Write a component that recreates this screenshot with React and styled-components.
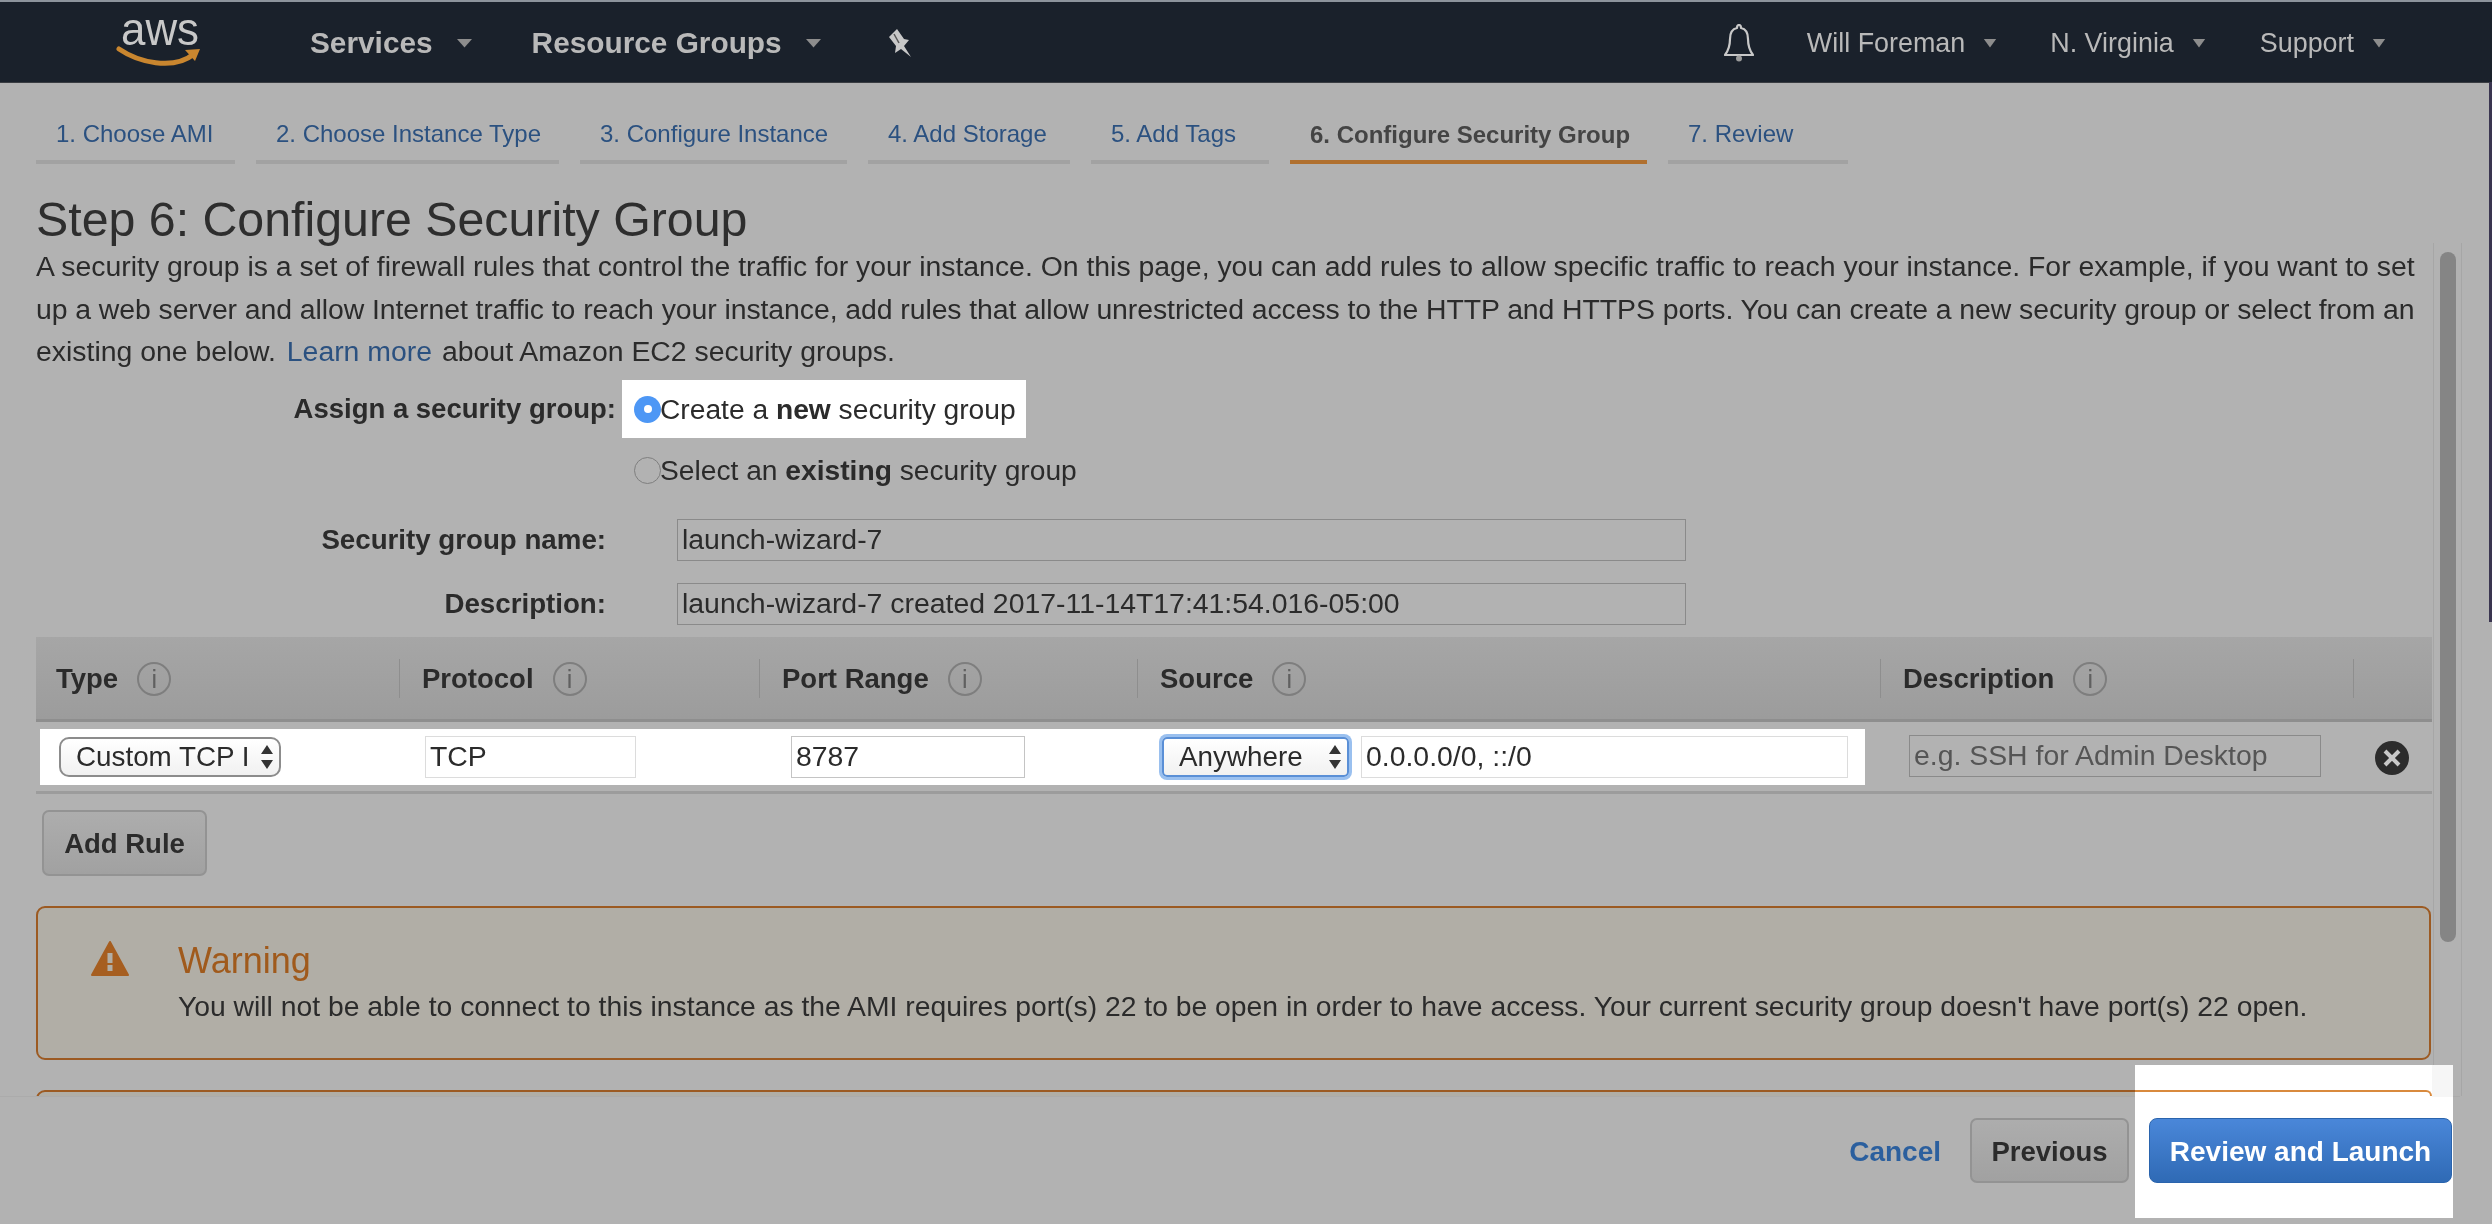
import React from "react";
import styled, { createGlobalStyle } from "styled-components";

const Global = createGlobalStyle`
  html, body { margin: 0; padding: 0; background: #b2b2b2; }
  body { font-family: "Liberation Sans", Arial, sans-serif; color: #2b2b2b; }
  * { box-sizing: border-box; }
`;

const Page = styled.div`
  position: relative;
  width: 2492px;
  height: 1224px;
  overflow: hidden;
  background: #b2b2b2;
  display: flex;
  flex-direction: column;
  filter: blur(0.4px);
`;

const EdgeStrip = styled.div`
  position: absolute;
  top: 82px;
  right: 0;
  width: 3px;
  height: 540px;
  background: #3a3550;
`;

const Nav = styled.header`
  height: 83px;
  flex: none;
  background: #1a212b;
  border-top: 2px solid #8d949c;
  border-bottom: 1px solid #3a3d42;
  display: flex;
  align-items: center;
  padding: 2px 106px 0 118px;
`;

const LogoBox = styled.svg`
  width: 90px;
  height: 60px;
  margin-right: 102px;
  margin-top: -2px;
  flex: none;
  overflow: visible;
`;

const NavLink = styled.span`
  display: inline-flex;
  align-items: center;
  gap: ${p => p.$gap ?? 23}px;
  font-size: ${p => (p.$bold ? 29.8 : 26.9)}px;
  font-weight: ${p => (p.$bold ? 700 : 400)};
  color: #b9b9b9;
  margin-right: ${p => p.$mr ?? 0}px;
  white-space: nowrap;
`;

const Caret = styled.svg`
  width: ${p => p.$w ?? 17}px;
  height: 10px;
  flex: none;
`;

const PinIcon = styled.svg`
  width: 24px;
  height: 30px;
  flex: none;
`;

const BellIcon = styled.svg`
  width: 30px;
  height: 38px;
  margin-right: 53px;
  flex: none;
`;

const NavRight = styled.div`
  margin-left: auto;
  display: flex;
  align-items: center;
`;

const Tabs = styled.nav`
  display: flex;
  gap: 21px;
  padding: 0 0 0 36px;
  margin-top: 34px;
  flex: none;
`;

const Tab = styled.div`
  width: ${p => p.$w}px;
  height: 47px;
  padding: ${p => (p.$active ? 4 : 3)}px 0 0 20px;
  border-bottom: 4px solid ${p => (p.$active ? "#b0702f" : "#a2a2a2")};
  font-size: 24px;
  font-weight: ${p => (p.$active ? 700 : 400)};
  color: ${p => (p.$active ? "#444" : "#2b5180")};
  line-height: 28px;
  white-space: nowrap;
`;

const Main = styled.main`
  position: relative;
  flex: none;
  height: 932px;
  padding: 28px 60px 0 36px;
  overflow: hidden;
`;

const Title = styled.h1`
  margin: 0;
  font-size: 48.3px;
  font-weight: 400;
  line-height: 54px;
  color: #2e2e2e;
`;

const Intro = styled.div`
  margin: -1px 0 0;
  font-size: 28.4px;
  line-height: 42.5px;
  color: #2b2b2b;
  white-space: nowrap;
`;

const IntroLine = styled.p`
  margin: 0;
  letter-spacing: ${p => p.$ls ?? 0}px;
`;

const Link = styled.span`
  color: #2b5180;
  margin-left: 3px;
  margin-right: 10px;
`;

const AssignRow = styled.div`
  display: flex;
  align-items: center;
  height: 60px;
  margin-top: ${p => p.$mt}px;
`;

const AssignLabel = styled.div`
  width: 580px;
  text-align: right;
  font-size: 27.5px;
  font-weight: 700;
  flex: none;
`;

const Choice = styled.div`
  display: inline-flex;
  align-items: center;
  height: 58px;
  padding: 0 10px 0 12px;
  margin-left: 6px;
  font-size: 28.2px;
  background: ${p => (p.$lit ? "#fff" : "transparent")};
  white-space: nowrap;
`;

const Radio = styled.span`
  width: 27px;
  height: 27px;
  margin-right: -1px;
  border-radius: 50%;
  flex: none;
  background: ${p => (p.$on ? "#4d97f5" : "transparent")};
  border: ${p => (p.$on ? "none" : "1.5px solid #7f7f7f")};
  display: flex;
  align-items: center;
  justify-content: center;
  &::after {
    content: "";
    display: ${p => (p.$on ? "block" : "none")};
    width: 8px;
    height: 8px;
    border-radius: 50%;
    background: #fff;
  }
`;

const FieldRow = styled.div`
  display: flex;
  align-items: center;
  height: 42px;
  margin-top: ${p => p.$mt}px;
`;

const FieldLabel = styled.div`
  width: 570px;
  text-align: right;
  font-size: 27.7px;
  font-weight: 700;
  flex: none;
`;

const FieldInput = styled.div`
  margin-left: 71px;
  width: 1009px;
  height: 42px;
  border: 1.5px solid #8a8a8a;
  padding-left: 4px;
  font-size: 28.4px;
  line-height: 38px;
  white-space: nowrap;
`;

const TableHead = styled.div`
  margin-top: 12px;
  width: 2396px;
  height: 85px;
  display: grid;
  grid-template-columns: 364px 360px 378px 743px 473px 78px;
  align-items: center;
  background: linear-gradient(#a6a6a6, #9c9c9c);
  border-bottom: 3px solid #8e8e8e;
`;

const HeadCell = styled.div`
  height: 39px;
  display: flex;
  align-items: center;
  gap: 19px;
  padding-top: 2px;
  padding-left: ${p => p.$pl ?? 22}px;
  font-size: 27.5px;
  font-weight: 700;
  border-right: ${p => (p.$bare ? "none" : "1px solid #8e8e8e")};
`;

const InfoIcon = styled.span`
  width: 34px;
  height: 34px;
  border-radius: 50%;
  border: 2.5px solid #7e7e7e;
  color: #606060;
  font-size: 25px;
  font-weight: 400;
  display: flex;
  align-items: center;
  justify-content: center;
`;

const RuleRow = styled.div`
  margin-top: 4px;
  width: 2396px;
  height: 68px;
  display: flex;
  border-bottom: 3px solid #9c9c9c;
  padding: 3px 0 5px 4px;
`;

const LitCell = styled.div`
  width: 1825px;
  height: 56px;
  background: #fff;
  flex: none;
  display: flex;
  align-items: center;
`;

const SelectBox = styled.div`
  width: ${p => p.$w}px;
  height: 40px;
  margin-left: ${p => p.$ml}px;
  flex: none;
  background: linear-gradient(#fff, #f1f1f1);
  border: 2px solid ${p => (p.$focus ? "#5a8fd6" : "#8c8c8c")};
  border-radius: ${p => (p.$focus ? 5 : 10)}px;
  box-shadow: ${p => (p.$focus ? "0 0 0 3px #9ac0ef" : "none")};
  display: flex;
  align-items: center;
  justify-content: space-between;
  padding: 0 5px 0 15px;
  font-size: 27.8px;
  color: #2b2b2b;
  white-space: nowrap;
  overflow: hidden;
`;

const SelectArrows = styled.svg`
  width: 14px;
  height: 26px;
  flex: none;
`;

const RowInput = styled.div`
  width: ${p => p.$w}px;
  height: 42px;
  margin-left: ${p => p.$ml}px;
  margin-top: ${p => p.$mt ?? 0}px;
  flex: none;
  border: 1.5px solid ${p => p.$c ?? "#dcdcdc"};
  padding-left: 4px;
  font-size: 28.4px;
  line-height: 38px;
  color: ${p => (p.$ph ? "#555" : "#2b2b2b")};
  white-space: nowrap;
`;

const RemoveBox = styled.svg`
  width: 36px;
  height: 36px;
  margin-left: 53px;
  margin-top: 11px;
  flex: none;
`;

const GreyButton = styled.div`
  height: ${p => p.$h}px;
  width: ${p => p.$w}px;
  flex: none;
  display: flex;
  align-items: center;
  justify-content: center;
  padding-top: 2px;
  font-size: 27.5px;
  font-weight: 700;
  color: #2b2b2b;
  border: 2px solid #939393;
  border-radius: 7px;
  background: linear-gradient(#adadad, #a1a1a1);
`;

const AddRuleWrap = styled.div`
  margin: 16px 0 0 6px;
`;

const Alert = styled.section`
  margin-top: 30px;
  width: 2395px;
  height: 154px;
  flex: none;
  background: #b1aea6;
  border: 2px solid #9c5a22;
  border-radius: 9px;
  display: flex;
  padding: 34px 0 0 53px;
`;

const AlertIcon = styled.svg`
  width: 38px;
  height: 37px;
  margin-top: -2px;
  flex: none;
  margin-right: 49px;
`;

const AlertTitle = styled.div`
  font-size: 36px;
  line-height: 38px;
  color: #a05a1c;
`;

const AlertText = styled.div`
  margin-top: 7px;
  font-size: 28.3px;
  line-height: 38px;
  color: #2b2b2b;
  white-space: nowrap;
`;

const NextAlert = styled.div`
  margin-top: 30px;
  width: 2395px;
  height: 60px;
  border: 2px solid #9c5a22;
  border-radius: 9px;
  background: #b1aea6;
`;

const Track = styled.div`
  position: absolute;
  top: 79px;
  right: 30px;
  bottom: 0;
  width: 29px;
  border-left: 1px solid #a6a6a6;
  border-right: 1px solid #a6a6a6;
`;

const Thumb = styled.div`
  position: absolute;
  top: 9px;
  left: 6px;
  width: 16px;
  height: 690px;
  border-radius: 8px;
  background: #858585;
`;

const Footer = styled.footer`
  display: flex;
  justify-content: flex-end;
  align-items: center;
  gap: 20px;
  padding: 21px 8px 0 0;
  border-top: 1px solid #ababab;
  margin-right: 32px;
`;

const CancelLink = styled.span`
  padding-top: 2px;
  font-size: 28px;
  font-weight: 700;
  color: #2b5f9e;
  margin-right: 9px;
`;

const FooterSpacer = styled.div`
  width: 303px;
  height: 65px;
`;

const Spotlight = styled.div`
  position: absolute;
  left: 2135px;
  top: 1065px;
  width: 318px;
  height: 153px;
  background: #fff;
  padding-top: 25px;
`;

const SpotTrack = styled.div`
  position: absolute;
  top: 0;
  left: 297px;
  width: 21px;
  height: 32px;
  background: #f6f6f6;
`;

const SpotEdge = styled.div`
  position: relative;
  height: 6px;
  margin-right: 21px;
  border-top: 2px solid #d98a3d;
  border-right: 2px solid #d98a3d;
  border-top-right-radius: 9px;
`;

const PrimaryButton = styled.div`
  position: absolute;
  left: 14px;
  top: 53px;
  width: 303px;
  height: 65px;
  display: flex;
  align-items: center;
  justify-content: center;
  padding-top: 2px;
  font-size: 28px;
  font-weight: 700;
  color: #fff;
  border-radius: 8px;
  border: 1px solid #2a64ad;
  background: linear-gradient(#4a87d9, #2f6ab5);
`;

const Down = ({ w }) => (
  <Caret $w={w} viewBox="0 0 17 10" preserveAspectRatio="none"><path d="M1 1h15L8.5 9.5z" fill="#8d8d8d" /></Caret>
);
const Arrows = () => (
  <SelectArrows viewBox="0 0 14 26"><path d="M7 1l6 9H1zM7 25l-6-9h12z" fill="#333" /></SelectArrows>
);
const Info = () => <InfoIcon>i</InfoIcon>;

const tabs = [
  ["1. Choose AMI", 199], ["2. Choose Instance Type", 303], ["3. Configure Instance", 267],
  ["4. Add Storage", 202], ["5. Add Tags", 178], ["6. Configure Security Group", 357, true], ["7. Review", 180],
];

export default function App() {
  return (
    <Page>
      <Global />
      <Nav>
        <LogoBox viewBox="0 0 90 60">
          <text x="3" y="33" fontFamily="Liberation Sans" fontSize="46" fill="#c8c8c8" textLength="78" lengthAdjust="spacingAndGlyphs">aws</text>
          <path d="M1 37C20 50 55 59 76 42" fill="none" stroke="#c9862f" strokeWidth="5" strokeLinecap="round" />
          <path d="M67 38l15-1-5 12z" fill="#c9862f" />
        </LogoBox>
        <NavLink $bold $mr={59}>Services <Down /></NavLink>
        <NavLink $bold $mr={66}>Resource Groups <Down /></NavLink>
        <PinIcon viewBox="0 0 24 30">
          <path d="M1 9L9 1l7 10 5 1-5 6 7 11-10-8-6 4 1-7z" fill="#c8c8c8" />
          <path d="M6 6l5 9" stroke="#555" strokeWidth="1.5" />
        </PinIcon>
        <NavRight>
          <BellIcon viewBox="0 0 30 38">
            <path d="M15 1c-1.500 0-2 1-2 3-5 1-7 5-7 11 0 8-2 12-5 16h28c-3-4-5-8-5-16 0-6-2-10-7-11 0-2-.5-3-2-3z" fill="none" stroke="#c8c8c8" strokeWidth="2.2" strokeLinejoin="round" />
            <circle cx="15" cy="34.500" r="3" fill="#9b9b9b" />
          </BellIcon>
          <NavLink $gap={18} $mr={53}>Will Foreman <Down w={14} /></NavLink>
          <NavLink $gap={18} $mr={54}>N. Virginia <Down w={14} /></NavLink>
          <NavLink $gap={18}>Support <Down w={14} /></NavLink>
        </NavRight>
      </Nav>
      <Tabs>
        {tabs.map(([t, w, a]) => <Tab key={t} $w={w} $active={a}>{t}</Tab>)}
      </Tabs>
      <Main>
        <Title>Step 6: Configure Security Group</Title>
        <Intro>
          <IntroLine>A security group is a set of firewall rules that control the traffic for your instance. On this page, you can add rules to allow specific traffic to reach your instance. For example, if you want to set</IntroLine>
          <IntroLine $ls={-0.067}>up a web server and allow Internet traffic to reach your instance, add rules that allow unrestricted access to the HTTP and HTTPS ports. You can create a new security group or select from an</IntroLine>
          <IntroLine>existing one below. <Link>Learn more</Link>about Amazon EC2 security groups.</IntroLine>
        </Intro>
        <AssignRow $mt={6.5}>
          <AssignLabel>Assign a security group:</AssignLabel>
          <Choice $lit><Radio $on />Create a&nbsp;<b>new</b>&nbsp;security group</Choice>
        </AssignRow>
        <AssignRow $mt={1}>
          <AssignLabel />
          <Choice><Radio />Select an&nbsp;<b>existing</b>&nbsp;security group</Choice>
        </AssignRow>
        <FieldRow $mt={19}>
          <FieldLabel>Security group name:</FieldLabel>
          <FieldInput>launch-wizard-7</FieldInput>
        </FieldRow>
        <FieldRow $mt={22}>
          <FieldLabel>Description:</FieldLabel>
          <FieldInput>launch-wizard-7 created 2017-11-14T17:41:54.016-05:00</FieldInput>
        </FieldRow>
        <TableHead>
          <HeadCell $pl={20}>Type <Info /></HeadCell>
          <HeadCell>Protocol <Info /></HeadCell>
          <HeadCell>Port Range <Info /></HeadCell>
          <HeadCell>Source <Info /></HeadCell>
          <HeadCell>Description <Info /></HeadCell>
          <HeadCell $bare />
        </TableHead>
        <RuleRow>
          <LitCell>
            <SelectBox $w={222} $ml={19}>Custom TCP I <Arrows /></SelectBox>
            <RowInput $w={211} $ml={144}>TCP</RowInput>
            <RowInput $w={234} $ml={155} $c="#c4c4c4">8787</RowInput>
            <SelectBox $w={187} $ml={137} $focus>Anywhere <Arrows /></SelectBox>
            <RowInput $w={487} $ml={12}>0.0.0.0/0, ::/0</RowInput>
          </LitCell>
          <RowInput $w={412} $ml={44} $mt={6} $c="#8a8a8a" $ph>e.g. SSH for Admin Desktop</RowInput>
          <RemoveBox viewBox="0 0 36 36">
            <circle cx="18" cy="18" r="17" fill="#2c2c2c" />
            <path d="M11 11l14 14M25 11L11 25" stroke="#c8c8c8" strokeWidth="4" />
          </RemoveBox>
        </RuleRow>
        <AddRuleWrap><GreyButton $w={165} $h={66}>Add Rule</GreyButton></AddRuleWrap>
        <Alert>
          <AlertIcon viewBox="0 0 38 37">
            <path d="M19 2L37 35H1z" fill="#a65e20" stroke="#a65e20" strokeWidth="2" strokeLinejoin="round" />
            <rect x="16.500" y="13" width="5" height="10" fill="#b1aea6" />
            <rect x="16.500" y="25" width="5" height="6" fill="#b1aea6" />
          </AlertIcon>
          <div>
            <AlertTitle>Warning</AlertTitle>
            <AlertText>You will not be able to connect to this instance as the AMI requires port(s) 22 to be open in order to have access. Your current security group doesn't have port(s) 22 open.</AlertText>
          </div>
        </Alert>
        <NextAlert />
        <Track><Thumb /></Track>
      </Main>
      <Footer>
        <CancelLink>Cancel</CancelLink>
        <GreyButton $w={159} $h={65}>Previous</GreyButton>
        <FooterSpacer />
      </Footer>
      <Spotlight>
        <SpotTrack />
        <SpotEdge />
        <PrimaryButton>Review and Launch</PrimaryButton>
      </Spotlight>
      <EdgeStrip />
    </Page>
  );
}
